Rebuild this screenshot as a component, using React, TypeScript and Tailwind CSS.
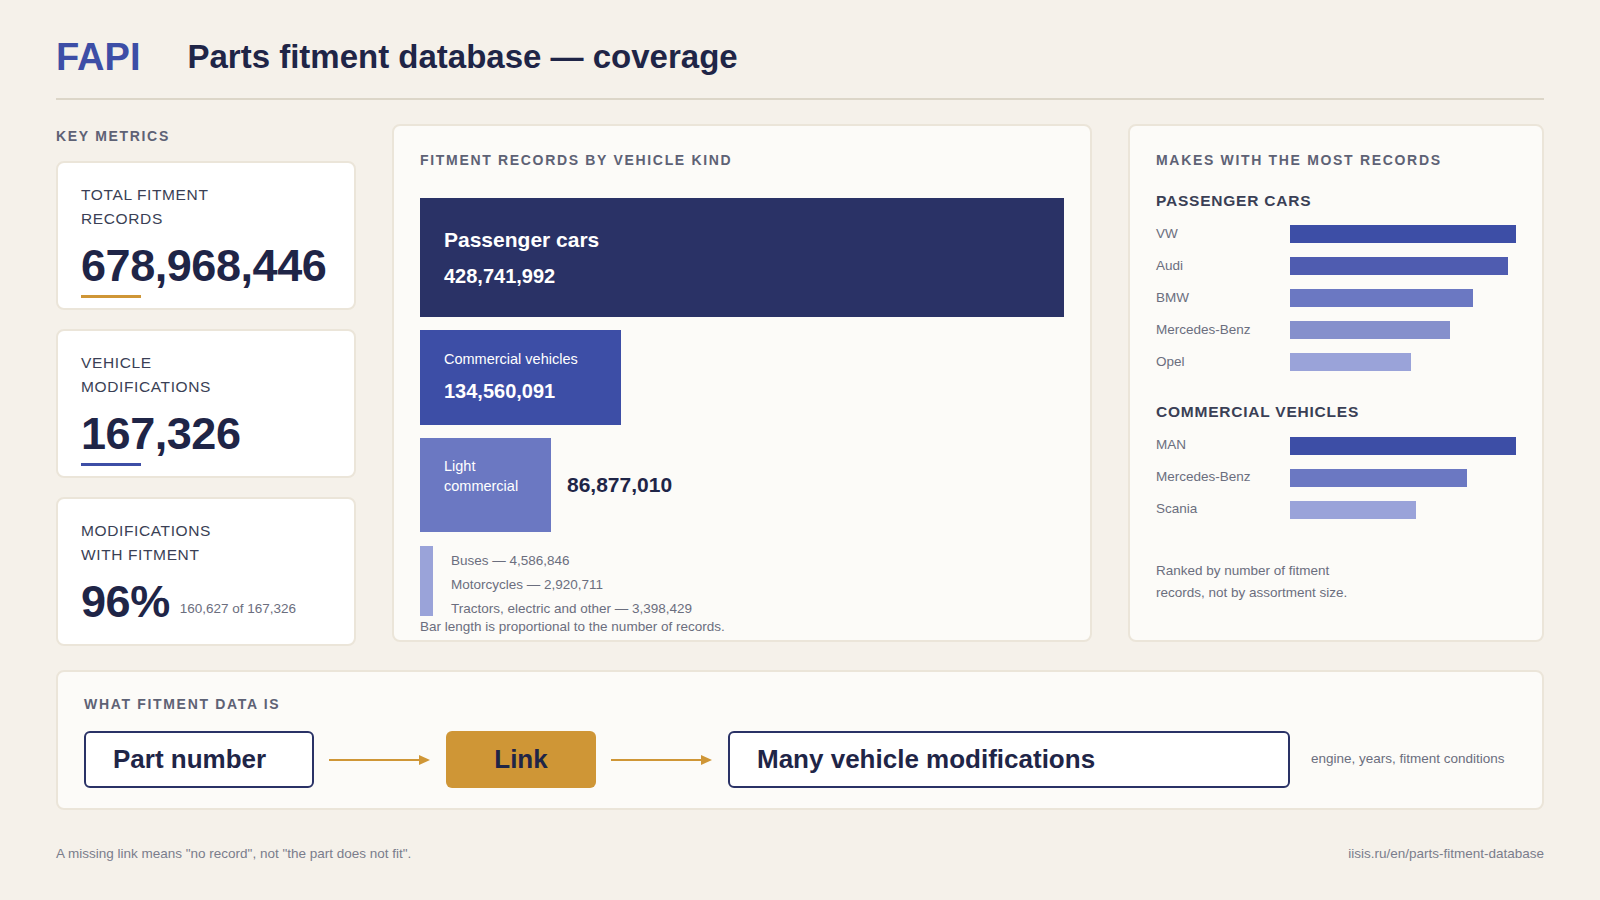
import React from "react";

const F = { fontFamily: '"Liberation Sans", Arial, sans-serif' };

function Metric({ label, value, bar, extra }: { label: string[]; value: string; bar: string; extra?: string }) {
  return (
    <div className="h-[149px] rounded-lg border-2 border-[#ebe5d9] bg-white px-[23px] pt-[20px]">
      <div className="text-[15.5px] leading-[24px] tracking-[0.04em] text-[#3a3f55]">
        {label.map((l) => <div key={l}>{l}</div>)}
      </div>
      <div className="mt-[12px] flex items-end gap-[10px]">
        <div className="text-[45px] font-bold leading-[46px] tracking-[-0.01em] text-[#1f2547]">{value}</div>
        {extra && <div className="mb-[6px] text-[13.5px] text-[#6b6e7e]">{extra}</div>}
      </div>
      {!extra && <div className={`mt-[6px] h-[3px] w-[60px] ${bar}`} />}
    </div>
  );
}

function Row({ name, w, c }: { name: string; w: number; c: string }) {
  return (
    <div className="flex h-[32px] items-center">
      <div className="w-[134px] text-[13.5px] text-[#6b6e7e]">{name}</div>
      <div className={`h-[18px] ${c}`} style={{ width: w }} />
    </div>
  );
}

function Arrow() {
  return (
    <svg width="102" height="12" viewBox="0 0 102 12">
      <line x1="0" y1="6" x2="92" y2="6" stroke="#cf9636" strokeWidth="2" />
      <polygon points="90,1 101,6 90,11" fill="#cf9636" />
    </svg>
  );
}

export default function App() {
  return (
    <div style={F} className="h-[900px] w-[1600px] bg-[#f5f1ea] px-[56px] text-[#1f2547]">
      <div className="flex h-[100px] items-center gap-[47px] border-b-2 border-[#dcd6c8] pt-[16px]">
        <div className="text-[38px] font-bold text-[#3d4ea6]">FAPI</div>
        <div className="text-[33px] font-bold">Parts fitment database — coverage</div>
      </div>
      <div className="mt-[24px] flex gap-[36px]">
        <div className="flex w-[300px] flex-col">
          <div className="mb-[14px] mt-[2px] text-[14px] font-bold tracking-[0.12em] text-[#5e6275]">KEY METRICS</div>
          <div className="flex flex-col gap-[19px]">
            <Metric label={["TOTAL FITMENT", "RECORDS"]} value="678,968,446" bar="bg-[#cf9636]" />
            <Metric label={["VEHICLE", "MODIFICATIONS"]} value="167,326" bar="bg-[#3d4ea6]" />
            <Metric label={["MODIFICATIONS", "WITH FITMENT"]} value="96%" bar="" extra="160,627 of 167,326" />
          </div>
        </div>
        <div className="h-[518px] w-[700px] rounded-lg border-2 border-[#ebe5d9] bg-[#fcfbf8] px-[26px] pt-[24px]">
          <div className="text-[14px] font-bold tracking-[0.12em] text-[#5e6275]">FITMENT RECORDS BY VEHICLE KIND</div>
          <div className="mt-[27px] flex h-[119px] w-[644px] flex-col justify-center gap-[6px] bg-[#2a3266] px-[24px] text-white">
            <div className="text-[21px] font-bold">Passenger cars</div>
            <div className="text-[20px] font-bold">428,741,992</div>
          </div>
          <div className="mt-[13px] flex h-[95px] w-[201px] flex-col justify-center gap-[6px] bg-[#3d4ea6] px-[24px] text-white">
            <div className="text-[14.5px]">Commercial vehicles</div>
            <div className="text-[20px] font-bold">134,560,091</div>
          </div>
          <div className="mt-[13px] flex items-center gap-[16px]">
            <div className="h-[94px] w-[131px] bg-[#6b78c2] px-[24px] pt-[18px] text-[14.5px] leading-[20px] text-white">Light<br />commercial</div>
            <div className="text-[21px] font-bold">86,877,010</div>
          </div>
          <div className="mt-[14px] flex gap-[18px]">
            <div className="h-[70px] w-[13px] bg-[#9aa3d9]" />
            <div className="flex flex-col gap-[6px] pt-[6px] text-[13.5px] leading-[18px] text-[#6b6e7e]">
              <div>Buses — 4,586,846</div>
              <div>Motorcycles — 2,920,711</div>
              <div>Tractors, electric and other — 3,398,429</div>
            </div>
          </div>
          <div className="text-[13.5px] leading-[18px] text-[#6b6e7e]">Bar length is proportional to the number of records.</div>
        </div>
        <div className="h-[518px] flex-1 rounded-lg border-2 border-[#ebe5d9] bg-[#fcfbf8] px-[26px] pt-[24px]">
          <div className="text-[14px] font-bold tracking-[0.12em] text-[#5e6275]">MAKES WITH THE MOST RECORDS</div>
          <div className="mt-[18px] mb-[6px] text-[15.5px] font-bold tracking-[0.05em] text-[#3a3f55]">PASSENGER CARS</div>
          <Row name="VW" w={226} c="bg-[#3d4ea6]" />
          <Row name="Audi" w={218} c="bg-[#4f5cb0]" />
          <Row name="BMW" w={183} c="bg-[#6b78c2]" />
          <Row name="Mercedes-Benz" w={160} c="bg-[#8590cc]" />
          <Row name="Opel" w={121} c="bg-[#9aa3d9]" />
          <div className="mt-[22px] mb-[6px] text-[15.5px] font-bold tracking-[0.05em] text-[#3a3f55]">COMMERCIAL VEHICLES</div>
          <Row name="MAN" w={226} c="bg-[#3d4ea6]" />
          <Row name="Mercedes-Benz" w={177} c="bg-[#6b78c2]" />
          <Row name="Scania" w={126} c="bg-[#9aa3d9]" />
          <div className="mt-[34px] text-[13.5px] leading-[22px] text-[#6b6e7e]">Ranked by number of fitment<br />records, not by assortment size.</div>
        </div>
      </div>
      <div className="mt-[24px] h-[140px] rounded-lg border-2 border-[#ebe5d9] bg-[#fcfbf8] px-[26px] pt-[22px]">
        <div className="text-[14px] font-bold tracking-[0.12em] text-[#5e6275]">WHAT FITMENT DATA IS</div>
        <div className="mt-[16px] flex items-center">
          <div className="flex h-[57px] w-[230px] items-center rounded-md border-2 border-[#2a3266] bg-white px-[27px] text-[26px] font-bold">Part number</div>
          <div className="mx-[15px]"><Arrow /></div>
          <div className="flex h-[57px] w-[150px] items-center justify-center rounded-md bg-[#cf9636] text-[26px] font-bold">Link</div>
          <div className="mx-[15px]"><Arrow /></div>
          <div className="flex h-[57px] w-[562px] items-center rounded-md border-2 border-[#2a3266] bg-white px-[27px] text-[26px] font-bold">Many vehicle modifications</div>
          <div className="ml-[21px] text-[13.5px] text-[#6b6e7e]">engine, years, fitment conditions</div>
        </div>
      </div>
      <div className="mt-[34px] flex justify-between text-[13.5px] text-[#7a7d8c]">
        <div>A missing link means "no record", not "the part does not fit".</div>
        <div>iisis.ru/en/parts-fitment-database</div>
      </div>
    </div>
  );
}
